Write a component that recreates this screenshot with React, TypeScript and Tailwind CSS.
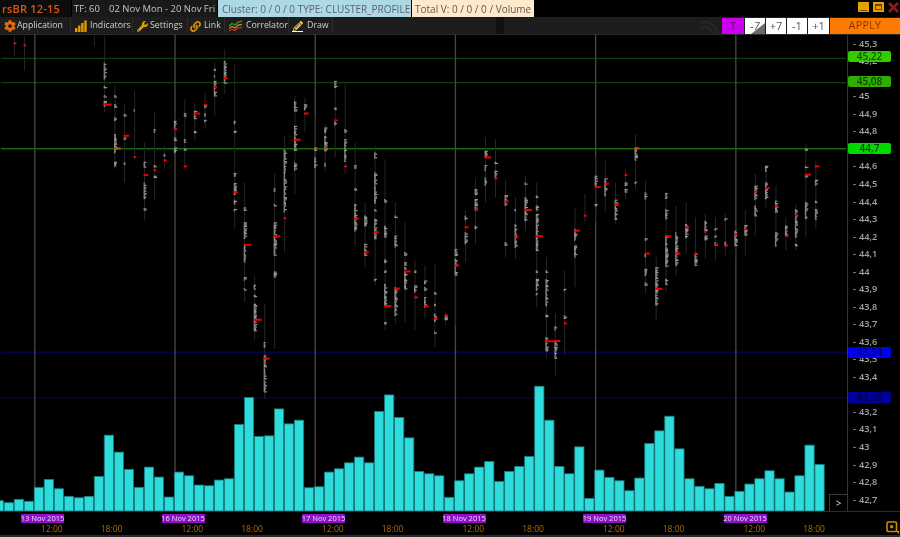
import { FaCog, FaWrench, FaLink, FaPencilAlt } from 'react-icons/fa';

type Col = [number, number, number, number, number, number[][]];

// footprint columns, read off 3x crops: [x, top, bottom, poc y, poc length, dense ranges]
const panelA: Col[] = [
  [41, 0, 60, 22, 8, []],
  [71, 0, 105, 28, 8, []],
  [281, 0, 30, 0, 0, []],
  [312, 0, 230, 206, 24, [[80, 130], [150, 156], [178, 184], [195, 210]]],
  [343, 150, 400, 338, 20, [[178, 182], [205, 215], [245, 255], [295, 350], [378, 392]]],
  [372, 205, 440, 300, 16, [[235, 240], [305, 312], [380, 386]]],
  [402, 165, 370, 364, 8, [[220, 225]]],
  [432, 320, 555, 418, 14, [[378, 395], [440, 490], [518, 522]]],
  [462, 230, 490, 403, 8, [[280, 288], [388, 394], [420, 426]]],
  [492, 330, 400, 374, 10, [[355, 362]]],
  [523, 230, 355, 280, 10, [[255, 280], [305, 315], [335, 352]]],
  [553, 190, 400, 392, 10, [[232, 240], [310, 318], [338, 344]]],
  [583, 205, 315, 233, 18, [[225, 250], [285, 289]]],
  [614, 170, 280, 207, 10, [[207, 215], [232, 240], [252, 256]]],
  [643, 80, 240, 154, 10, [[98, 104], [118, 122], [135, 180]]],
  [673, 40, 175, 128, 10, [[75, 140]]],
  [703, 85, 580, 470, 12, [[255, 265], [285, 290], [412, 420], [442, 475], [492, 505], [520, 525]]],
  [733, 440, 800, 628, 22, [[515, 525], [560, 610], [630, 680], [725, 735], [758, 762]]],
  [763, 720, 915, 853, 24, [[748, 762], [778, 784], [805, 885]]],
  [793, 805, 1090, 970, 18, [[920, 935], [960, 1070]]],
  [823, 415, 940, 602, 20, [[458, 468], [505, 510], [560, 660], [708, 725]]],
  [853, 300, 650, 548, 8, [[340, 530]]],
];

const panelB: Col[] = [
  [29, 180, 475, 312, 20, [[195, 225], [270, 345], [380, 405]]],
  [59, 185, 290, 233, 14, [[205, 222]]],
  [90, 240, 400, 338, 10, [[335, 345], [365, 395]]],
  [120, 265, 405, 338, 10, [[275, 290], [300, 345], [382, 390]]],
  [150, 135, 365, 254, 10, [[135, 155], [215, 222], [258, 268]]],
  [180, 145, 415, 392, 8, [[280, 290], [310, 375]]],
  [210, 320, 630, 549, 14, [[388, 396], [458, 463], [505, 585]]],
  [240, 500, 695, 650, 14, [[540, 570], [625, 660]]],
  [270, 330, 750, 590, 14, [[350, 365], [410, 500], [520, 525], [550, 610], [730, 735]]],
  [300, 370, 885, 812, 22, [[490, 500], [570, 605], [672, 680], [705, 709], [745, 810], [860, 865]]],
  [331, 500, 865, 759, 16, [[540, 545], [600, 635], [755, 840]]],
  [360, 560, 860, 708, 20, [[650, 660], [680, 690], [695, 700], [708, 760]]],
  [390, 675, 885, 786, 12, [[705, 710], [750, 770]]],
  [420, 690, 850, 813, 14, [[735, 745], [755, 765], [785, 815]]],
  [450, 685, 935, 849, 10, [[770, 775], [805, 812], [835, 860], [888, 892]]],
  [482, 830, 870, 840, 10, [[840, 852]]],
  [512, 640, 870, 690, 14, [[640, 660], [670, 720]]],
  [542, 525, 680, 575, 12, [[540, 552], [590, 625]]],
  [572, 430, 625, 523, 10, [[460, 475], [490, 525], [570, 580]]],
  [602, 305, 500, 365, 20, [[345, 360], [388, 405], [425, 450]]],
  [632, 310, 485, 428, 8, [[378, 385], [405, 425]]],
  [662, 435, 665, 497, 12, [[478, 510], [620, 628]]],
  [692, 485, 670, 603, 12, [[520, 525], [565, 635]]],
  [722, 420, 585, 523, 22, [[440, 445], [485, 555]]],
  [756, 440, 815, 602, 22, [[480, 484], [510, 522], [535, 645], [705, 710], [730, 765], [773, 778]]],
  [785, 665, 970, 918, 28, [[705, 710], [730, 810], [838, 842], [905, 945]]],
  [812, 835, 1020, 917, 18, [[872, 885], [920, 970]]],
  [840, 705, 960, 864, 10, [[760, 765], [840, 850]]],
];

const panelC: Col[] = [
  [16, 515, 755, 585, 18, [[580, 615], [630, 665]]],
  [46, 475, 560, 540, 8, []],
  [78, 360, 560, 454, 18, [[420, 450], [505, 510]]],
  [107, 375, 530, 444, 14, [[428, 480]]],
  [138, 440, 565, 506, 14, [[492, 550]]],
  [168, 400, 490, 418, 8, [[440, 450], [460, 470]]],
  [198, 295, 460, 338, 14, [[335, 372], [438, 442]]],
  [228, 435, 775, 654, 16, [[470, 490], [608, 614], [655, 665], [700, 720], [740, 750]]],
  [260, 665, 855, 760, 22, [[695, 810]]],
  [290, 470, 770, 602, 18, [[472, 488], [520, 550], [600, 690], [730, 745]]],
  [320, 510, 720, 654, 16, [[590, 690]]],
  [350, 500, 655, 575, 12, [[565, 605]]],
  [378, 545, 695, 654, 8, [[655, 690]]],
  [408, 535, 670, 590, 6, [[555, 585], [600, 612]]],
  [438, 545, 675, 627, 10, [[578, 584], [600, 605], [620, 628]]],
  [468, 535, 660, 629, 10, [[548, 555], [618, 630]]],
  [498, 570, 665, 596, 8, [[585, 630]]],
  [528, 525, 660, 581, 8, [[568, 600]]],
  [558, 415, 600, 468, 8, [[450, 490], [510, 540]]],
  [590, 390, 515, 457, 14, [[390, 405], [440, 490]]],
  [620, 450, 635, 512, 10, [[495, 530], [590, 630]]],
  [650, 545, 645, 601, 8, [[570, 600]]],
  [680, 505, 645, 539, 10, [[520, 605], [625, 632]]],
  [710, 325, 605, 417, 18, [[338, 342], [390, 395], [418, 425], [500, 550]]],
  [740, 375, 580, 392, 14, [[432, 448], [495, 500], [520, 552]]],
];

// volume bar tops, first bar is cut by the left edge
const barTops = [
  500.7, 502.7, 499.3, 501.3, 487.3, 479.3, 488.7, 496.3, 497.7, 496.3, 476.3, 435, 452, 469.3, 487.3, 467, 477, 497,
  472, 475.7, 485, 485.7, 480, 478.7, 424.3, 397.3, 436.3, 435.7, 408.7, 423.7, 420, 487.7, 486.7, 472, 468.7, 462.7,
  457, 462.7, 411.3, 394.7, 417.3, 437.7, 471.3, 473.7, 475.7, 497.3, 480.7, 473.7, 467, 461.3, 481.3, 471.3, 466.3,
  456.3, 386, 420, 466.3, 473.7, 446.7, 498.3, 470, 477.3, 480.7, 490.7, 478, 443.3, 430.7, 416, 448.7, 478.7, 486.3,
  488.7, 483.3, 496.3, 491.3, 484, 478.7, 470.7, 478.7, 492, 475.7, 445, 464.3,
];

// labels fully covered by a price tag are left blank
const prices = [
  '45,3', '45,2', '', '45', '44,9', '44,8', '', '44,6', '44,5', '44,4', '44,3', '44,2', '44,1', '44', '43,9',
  '43,8', '43,7', '43,6', '43,5', '43,4', '', '43,2', '43,1', '43', '42,9', '42,8', '42,7',
];

const dates = ['13 Nov 2015', '16 Nov 2015', '17 Nov 2015', '18 Nov 2015', '19 Nov 2015', '20 Nov 2015'];

const sessions = [34, 174.5, 315, 455.5, 596, 736.5];

const rand = (n: number) => {
  const v = Math.sin(n * 12.9898) * 43758.5453;
  return v - Math.floor(v);
};

const Footprint = ({ col, off }: { col: Col; off: number }) => {
  const [zx, top, bottom, poc, pocLen, blobs] = col;
  const x = off + zx / 3;
  const sy = (z: number) => 35 + z / 3;
  const dots: { y: number; w: number }[] = [];
  blobs.forEach(([a, b]) => {
    for (let y = sy(a); y <= sy(b); y += 1.2) {
      dots.push({ y, w: 1 + rand(x + y) * 2.6 });
    }
  });
  const onLine = poc === 338;
  return (
    <g>
      <line x1={x} x2={x} y1={sy(top)} y2={sy(bottom)} stroke="#262626" strokeWidth="1" />
      {dots.map((d, i) => (
        <rect key={i} x={x - 1} y={d.y} width={d.w} height="1.2" fill="#949494" />
      ))}
      {poc > 0 && (
        <rect x={x - 1} y={sy(poc) - 1} width={pocLen / 3} height="2" fill={onLine ? '#b85a00' : '#ee0000'} />
      )}
    </g>
  );
};

const ChartCanvas = () => (
  <svg className="block h-full w-full" viewBox="0 34 847 477">
    <line x1="0" x2="847" y1="57.3" y2="57.3" stroke="#125010" strokeWidth="1.2" />
    <line x1="0" x2="847" y1="81.8" y2="81.8" stroke="#0e420c" strokeWidth="1.2" />
    <line x1="0" x2="847" y1="148" y2="148" stroke="#116a0e" strokeWidth="1.4" />
    <line x1="0" x2="847" y1="351.8" y2="351.8" stroke="#000070" strokeWidth="1.2" />
    <line x1="0" x2="847" y1="397.3" y2="397.3" stroke="#00005c" strokeWidth="1.2" />
    {sessions.map((x) => (
      <line key={x} x1={x} x2={x} y1="34" y2="511" stroke="#484848" strokeWidth="1.3" />
    ))}
    {panelA.map((c) => (
      <Footprint key={c[0]} col={c} off={0} />
    ))}
    {panelB.map((c) => (
      <Footprint key={c[0]} col={c} off={285} />
    ))}
    {panelC.map((c) => (
      <Footprint key={c[0]} col={c} off={570} />
    ))}
    {barTops.map((top, i) => (
      <rect
        key={i}
        x={3.3 + (i - 1) * 10.03}
        y={top}
        width="9.3"
        height={511 - top}
        fill="#2edcdc"
        stroke="#177d7f"
        strokeWidth="0.8"
      />
    ))}
  </svg>
);

const BarsIcon = () => (
  <svg width="12" height="12" viewBox="0 0 12 12" fill="#e39a00">
    <rect x="0" y="8" width="2.4" height="4" />
    <rect x="3.1" y="5.5" width="2.4" height="6.5" />
    <rect x="6.2" y="3" width="2.4" height="9" />
    <rect x="9.3" y="0.5" width="2.4" height="11.5" />
  </svg>
);

const CorrelatorIcon = () => (
  <svg width="13" height="12" viewBox="0 0 13 12" fill="none" strokeWidth="1.3">
    <path d="M0 6 L3 3.5 L6 5 L9 2 L13 1" stroke="#2f9a3a" />
    <path d="M0 8.5 L3 6.5 L6 8 L9 5 L13 4.5" stroke="#d98a10" />
    <path d="M0 11 L3 9.5 L6 10.5 L9 8 L13 7.5" stroke="#c0301c" />
  </svg>
);

const DrawIcon = () => (
  <span className="flex flex-col items-center">
    <FaPencilAlt className="h-[10px] w-[10px] text-[#e8c23a]" />
    <span className="h-px w-[11px] bg-white" />
  </span>
);

const tools = [
  { label: 'Application', icon: <FaCog className="h-[12px] w-[12px] text-[#e8690b]" />, w: 'w-[71px]', pl: 'pl-[4px]', gap: 'gap-[1px]' },
  { label: 'Indicators', icon: <BarsIcon />, w: 'w-[62px]', pl: 'pl-[4px]', gap: 'gap-[3px]' },
  { label: 'Settings', icon: <FaWrench className="h-[11px] w-[11px] text-[#e39a00]" />, w: 'w-[55px]', pl: 'pl-[4px]', gap: 'gap-[2px]' },
  { label: 'Link', icon: <FaLink className="h-[11px] w-[11px] text-[#d89200]" />, w: 'w-[37px]', pl: 'pl-[2px]', gap: 'gap-[3px]' },
  { label: 'Correlator', icon: <CorrelatorIcon />, w: 'w-[64px]', pl: 'pl-[4px]', gap: 'gap-[4px]' },
  { label: 'Draw', icon: <DrawIcon />, w: 'w-[44px]', pl: 'pl-[3px]', gap: 'gap-[4px]' },
];

const stepButton = 'flex h-[16px] items-center justify-center bg-white text-[11px] text-[#555]';

const PriceTag = ({ className, label }: { className: string; label: string }) => (
  <div className={`absolute left-[848px] flex h-[11px] w-[43px] items-center justify-center rounded-[2px] text-[10px] leading-[11px] font-semibold ${className}`}>
    {label}
  </div>
);

export default function App() {
  return (
    <div className="relative flex h-[537px] w-[900px] flex-col overflow-hidden bg-black font-['Open_Sans',sans-serif] blur-[0.35px]">
      {/* Title row */}
      <div className="flex h-[17px] shrink-0 items-stretch">
        <div className="flex w-[71px] items-center bg-[#0c0c0c] pt-[2px] pl-[2px] text-[11px] font-semibold tracking-[0.2px] text-[#e2570c]">
          rsBR 12-15
        </div>
        <div className="ml-px flex w-[145px] items-center gap-[9px] bg-[#191919] pt-px pl-[2px] text-[9.5px] whitespace-nowrap text-[#c4c4c4]">
          <span>TF: 60</span>
          <span>02 Nov Mon - 20 Nov Fri</span>
        </div>
        <div className="ml-px flex w-[193px] items-center bg-[#add8e6] pt-px pl-[4px] text-[10px] whitespace-nowrap text-[#5c6468]">
          Cluster: 0 / 0 / 0 TYPE: CLUSTER_PROFILE
        </div>
        <div className="ml-px flex w-[122px] items-center bg-[#ffe9cc] pt-px pl-[3px] text-[10px] whitespace-nowrap text-[#5e5a52]">
          Total V: 0 / 0 / 0 / Volume
        </div>
        <div className="ml-auto flex items-start gap-[4px] pt-[2px] pr-px">
          <div className="flex h-[10px] w-[11px] items-end justify-center bg-[#e8a000] pb-[1px]">
            <span className="h-[1.5px] w-[7px] bg-[#7a5200]" />
          </div>
          <div className="flex h-[10px] w-[11px] items-center justify-center bg-[#e8a000]">
            <span className="h-[6px] w-[7px] border border-t-2 border-[#6a4800]" />
          </div>
          <svg width="11" height="11" viewBox="0 0 11 11" stroke="#8c1c1c" strokeWidth="2.6">
            <path d="M1 1 L10 10 M10 1 L1 10" />
          </svg>
        </div>
      </div>

      {/* Toolbar */}
      <div className="flex h-[17px] shrink-0 items-stretch bg-[#1d1d1d]">
        {tools.map((t) => (
          <div key={t.label} className={`flex items-center border-r border-[#2c2c2c] pt-px text-[8.8px] whitespace-nowrap text-[#cfcfcf] ${t.w} ${t.pl} ${t.gap}`}>
            {t.icon}
            <span>{t.label}</span>
          </div>
        ))}
        <div className="ml-[163px] h-full w-[8px] bg-[#111]" />
        <div className="ml-auto flex items-start pt-px">
          <svg width="22" height="16" viewBox="0 0 22 16" fill="none" stroke="#272727" strokeWidth="2">
            <circle cx="5" cy="16" r="7" />
            <circle cx="5" cy="16" r="12" />
          </svg>
          <div className="flex h-[16px] w-[22px] items-center justify-center bg-[#cc00ee] text-[10px] text-[#5a1066]">
            T
          </div>
          <div className={`relative ml-px w-[20px] overflow-hidden ${stepButton}`}>
            <span className="italic">-7</span>
            <svg className="absolute right-0 bottom-0" width="14" height="11" viewBox="0 0 14 11">
              <polygon points="14,0 14,11 0,11" fill="#6a6a6a" />
            </svg>
          </div>
          <div className={`ml-px w-[20px] ${stepButton}`}>+7</div>
          <div className={`ml-px w-[20px] ${stepButton}`}>-1</div>
          <div className={`ml-px w-[21px] ${stepButton}`}>+1</div>
          <div className="ml-px flex h-[16px] w-[70px] items-center justify-center bg-[#ff7a00] text-[10.5px] tracking-[0.4px] text-[#7a3a00]">
            APPLY
          </div>
        </div>
      </div>

      {/* Plot and price axis */}
      <div className="flex min-h-0 flex-1 border-t border-[#2a2a2a]">
        <div className="min-w-0 flex-1">
          <ChartCanvas />
        </div>
        <div className="flex w-[53px] shrink-0 flex-col border-l border-[#363636] pl-[5px]">
          {prices.map((p, i) => (
            <div key={i} className="flex h-[17.54px] shrink-0 items-center gap-[3px] text-[9.2px] leading-[10px] font-semibold text-[#a4a4a4]">
              {p && <span>-</span>}
              <span>{p}</span>
            </div>
          ))}
        </div>
      </div>

      {/* Time axis */}
      <div className="relative h-[26px] shrink-0 border-t border-[#2c2c2c]">
        <div className="flex h-[13px] items-center pl-[21px]">
          {dates.map((d) => (
            <div key={d} className="w-[140.5px] shrink-0">
              <span className="flex h-[9px] w-[43px] items-center justify-center rounded-[1px] bg-[#8f10c8] text-[7.5px] leading-[9px] whitespace-nowrap text-[#e8dcf0]">
                {d}
              </span>
            </div>
          ))}
        </div>
        <div className="flex h-[8px] items-center pl-[41px]">
          {dates.map((d) => (
            <div key={d} className="flex w-[140.5px] shrink-0 gap-[38px] text-[8.5px] leading-[8px] text-[#b06c00]">
              <span>12:00</span>
              <span>18:00</span>
            </div>
          ))}
        </div>
        <div className="absolute inset-x-0 bottom-0 h-[2px] bg-[#2b2b2b]" />
        <svg className="absolute right-[1px] bottom-[3px]" width="13" height="13" viewBox="0 0 13 13" fill="none">
          <rect x="1" y="1" width="9.5" height="9.5" rx="1" stroke="#c98a00" strokeWidth="1.6" />
          <rect x="4.2" y="4.2" width="3" height="3" fill="#c98a00" />
          <polygon points="10,10 13,10 13,13" fill="#e8a000" />
        </svg>
      </div>

      {/* Overlays on the price axis */}
      <PriceTag className="top-[51px] bg-[#33cc00] text-[#1a4a08]" label="45,22" />
      <PriceTag className="top-[76px] bg-[#2fb000] text-[#163e08]" label="45,08" />
      <PriceTag className="top-[143px] bg-[#00d800] text-[#084008]" label="44,7" />
      <PriceTag className="top-[347px] bg-[#0000f0] text-[#000060]" label="43,54" />
      <PriceTag className="top-[392px] bg-[#00009c] text-[#000040]" label="43,28" />
      <div className="absolute top-[494px] left-[829px] flex h-[17px] w-[18px] items-center justify-center border-t border-l border-[#3a3a3a] bg-black text-[10px] font-semibold text-[#bbb]">
        &gt;
      </div>
    </div>
  );
}
